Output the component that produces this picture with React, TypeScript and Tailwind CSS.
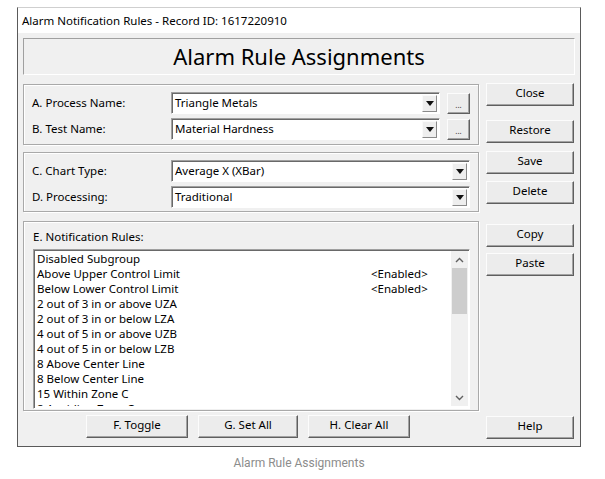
import React from 'react';

const raised =
  'bg-[#ececec] border border-t-[#fcfcfc] border-l-[#fcfcfc] border-r-[#5f5f5f] border-b-[#5f5f5f] shadow-[inset_-1px_-1px_0_#a3a3a3]';
const sunken =
  'bg-white border border-t-[#a0a0a0] border-l-[#a0a0a0] border-r-white border-b-white shadow-[inset_1px_1px_0_#696969]';
const etched = 'border border-[#a9a9a9] shadow-[inset_1px_1px_0_#ffffff,1px_1px_0_#ffffff]';

function Arrow() {
  return (
    <svg width="8" height="5" viewBox="0 0 8 5">
      <polygon points="0,0 8,0 4,5" fill="#111" />
    </svg>
  );
}

function Combo({ value, width }: { value: string; width: string }) {
  return (
    <div className={`${sunken} ${width} h-[22px] flex items-center pl-[3px] pr-[2px]`}>
      <span className="flex-1 leading-none">{value}</span>
      <div className="bg-[#eeeeee] border border-t-[#fafafa] border-l-[#fafafa] border-r-[#8a8a8a] border-b-[#8a8a8a] w-[15px] h-[17px] flex items-center justify-center">
        <Arrow />
      </div>
    </div>
  );
}

function DotsButton() {
  return (
    <div className={`${raised} w-[23px] h-[21px] flex items-end justify-center pb-[4px] text-[8px] leading-none text-[#333]`}>
      ...
    </div>
  );
}

function Btn({ label, className }: { label: string; className: string }) {
  return (
    <div className={`${raised} h-[23px] flex items-center justify-center leading-none pb-[3px] ${className}`}>
      {label}
    </div>
  );
}

const rules = [
  ['Disabled Subgroup', ''],
  ['Above Upper Control Limit', '<Enabled>'],
  ['Below Lower Control Limit', '<Enabled>'],
  ['2 out of 3 in or above UZA', ''],
  ['2 out of 3 in or below LZA', ''],
  ['4 out of 5 in or above UZB', ''],
  ['4 out of 5 in or below LZB', ''],
  ['8 Above Center Line', ''],
  ['8 Below Center Line', ''],
  ['15 Within Zone C', ''],
  ['8 Avoiding Zone C', ''],
];

export default function App() {
  return (
    <div className="w-[605px] h-[479px] bg-white pt-[7px] pl-[17px] font-['Noto_Sans',sans-serif] text-[11.5px] text-black">
      <div className="w-[564px] h-[440px] border border-[#5a5a5a] border-t-[#cfcfcf] flex flex-col bg-[#f0f0f0]">
        {/* title bar */}
        <div className="h-[25px] bg-white flex items-center pl-[4px] text-[11.5px]">
          Alarm Notification Rules - Record ID: 1617220910
        </div>

        <div className="flex flex-col px-[5px] pt-[5px]">
          <div className="h-[37px] border border-t-[#a0a0a0] border-l-[#a0a0a0] border-r-white border-b-white flex items-center justify-center text-[22px] leading-none pb-[1px]">
            Alarm Rule Assignments
          </div>

          <div className="flex gap-[7px] mt-[9px]">
            {/* left column */}
            <div className="w-[456px] flex flex-col">
              <div className={`${etched} h-[61px] pt-[7px] pl-[8px] flex flex-col gap-[4px]`}>
                <div className="flex items-center">
                  <span className="w-[139px]">A. Process Name:</span>
                  <Combo value="Triangle Metals" width="w-[269px]" />
                  <div className="ml-[7px]">
                    <DotsButton />
                  </div>
                </div>
                <div className="flex items-center">
                  <span className="w-[139px]">B. Test Name:</span>
                  <Combo value="Material Hardness" width="w-[269px]" />
                  <div className="ml-[7px]">
                    <DotsButton />
                  </div>
                </div>
              </div>

              <div className={`${etched} h-[60px] mt-[7px] pt-[7px] pl-[8px] flex flex-col gap-[4px]`}>
                <div className="flex items-center">
                  <span className="w-[139px]">C. Chart Type:</span>
                  <Combo value="Average X (XBar)" width="w-[299px]" />
                </div>
                <div className="flex items-center">
                  <span className="w-[139px]">D. Processing:</span>
                  <Combo value="Traditional" width="w-[299px]" />
                </div>
              </div>

              <div className={`${etched} h-[190px] mt-[9px] pl-[9px] flex flex-col`}>
                <div className="h-[27px] flex items-center pt-[2px]">E. Notification Rules:</div>
                <div className={`${sunken} w-[437px] h-[160px] flex px-[2px] pt-[1px] pb-[2px] pr-[1px]`}>
                  <div className="flex-1 overflow-hidden pl-[1px]">
                    {rules.map(([name, status]) => (
                      <div key={name} className="h-[15px] flex items-center leading-none whitespace-nowrap">
                        <span className="w-[334px]">{name}</span>
                        <span>{status}</span>
                      </div>
                    ))}
                  </div>
                  <div className="w-[17px] bg-[#f0f0f0] flex flex-col items-center">
                    <div className="h-[17px] flex items-center justify-center">
                      <svg width="9" height="6" viewBox="0 0 9 6">
                        <polyline points="1,5 4.5,1.5 8,5" fill="none" stroke="#606060" strokeWidth="1.4" />
                      </svg>
                    </div>
                    <div className="w-[15px] h-[46px] bg-[#cdcdcd]" />
                    <div className="flex-1" />
                    <div className="h-[17px] flex items-center justify-center">
                      <svg width="9" height="6" viewBox="0 0 9 6">
                        <polyline points="1,1 4.5,4.5 8,1" fill="none" stroke="#606060" strokeWidth="1.4" />
                      </svg>
                    </div>
                  </div>
                </div>
              </div>

              <div className="flex gap-[10px] ml-[63px] mt-[4px]">
                <Btn label="F. Toggle" className="w-[102px] h-[22px]" />
                <Btn label="G. Set All" className="w-[100px] h-[22px]" />
                <Btn label="H. Clear All" className="w-[102px] h-[22px]" />
              </div>
            </div>

            {/* right column */}
            <div className="w-[88px] flex flex-col">
              <Btn label="Close" className="w-[88px] mt-[-1px]" />
              <Btn label="Restore" className="w-[88px] mt-[14px]" />
              <Btn label="Save" className="w-[88px] mt-[8px]" />
              <Btn label="Delete" className="w-[88px] mt-[7px]" />
              <Btn label="Copy" className="w-[88px] mt-[20px]" />
              <Btn label="Paste" className="w-[88px] mt-[6px]" />
              <Btn label="Help" className="w-[88px] mt-[140px]" />
            </div>
          </div>
        </div>
      </div>
      <div className="w-[564px] mt-[7px] text-center font-['Roboto',sans-serif] text-[12px] text-[#8c8c8c]">
        Alarm Rule Assignments
      </div>
    </div>
  );
}
